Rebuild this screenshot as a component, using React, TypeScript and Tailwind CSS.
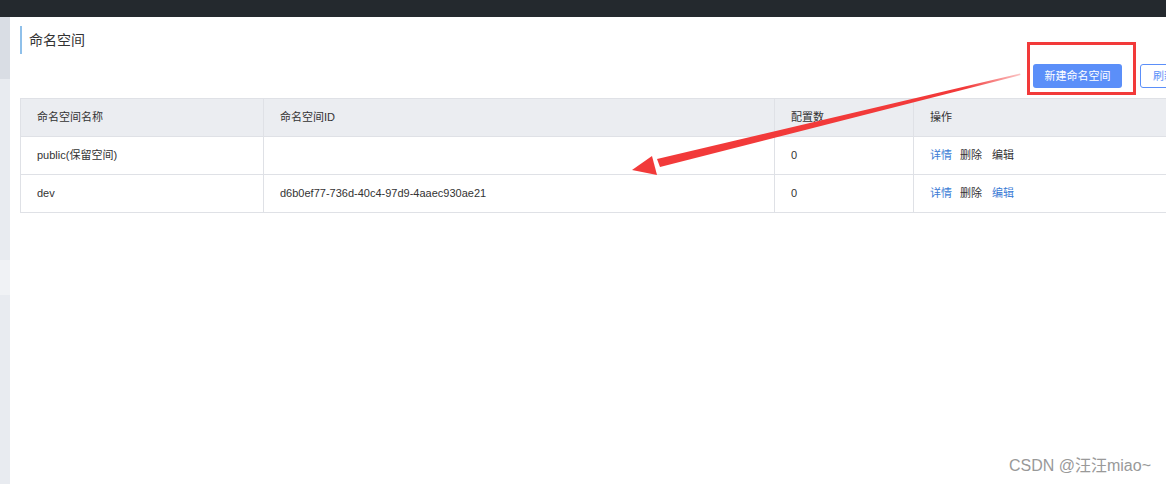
import React from "react";

const rows = [
  { name: "public(保留空间)", id: "", count: "0", editBlue: false },
  { name: "dev", id: "d6b0ef77-736d-40c4-97d9-4aaec930ae21", count: "0", editBlue: true },
];

const cellCls = "border-r border-b border-[#dfe1e6] px-4 align-middle";

export default function App() {
  return (
    <div
      className="relative w-[1166px] h-[484px] overflow-hidden bg-white text-[11px] text-[#333]"
      style={{ fontFamily: '"Liberation Sans", "Noto Sans CJK SC", sans-serif' }}
    >
      <div className="h-[17px] bg-[#24292e]" />
      <div className="flex h-[467px]">
        {/* sidebar edge */}
        <div className="w-[10px] shrink-0 flex flex-col bg-[#e8ebf0]">
          <div className="h-[62px] bg-[#d9dde4]" />
          <div className="h-[181px]" />
          <div className="h-[35px] bg-[#f0f2f5]" />
        </div>

        <div className="flex-1 pl-[10px] pt-[9px]">
          <div className="w-[1168px]">
            <div className="h-[28px] border-l-2 border-[#8fc0ea] pl-[7px] flex items-center text-[14px] text-[#333]">
              命名空间
            </div>

            <div className="mt-[10px] flex justify-end gap-[18px]">
              <div className="relative">
                <button className="h-[24px] w-[89px] rounded-[3px] bg-[#5b8ff9] text-white text-[11px]">
                  新建命名空间
                </button>
                <div className="absolute -left-[6px] -top-[22px] -right-[14px] -bottom-[7px] border-[3px] border-[#f23a3a]" />
              </div>
              <button className="h-[24px] w-[48px] rounded-[3px] border border-[#5b8ff9] bg-white text-[#5b8ff9] text-[11px]">
                刷新
              </button>
            </div>

            <table className="mt-[10px] w-full border-collapse border-l border-t border-[#dfe1e6] table-fixed">
              <colgroup>
                <col className="w-[243px]" />
                <col className="w-[511px]" />
                <col className="w-[139px]" />
                <col />
              </colgroup>
              <thead>
                <tr className="h-[38px] bg-[#ebedf1] text-left">
                  <th className={cellCls + " font-normal"}>命名空间名称</th>
                  <th className={cellCls + " font-normal"}>命名空间ID</th>
                  <th className={cellCls + " font-normal"}>配置数</th>
                  <th className={cellCls + " font-normal"}>操作</th>
                </tr>
              </thead>
              <tbody>
                {rows.map((r) => (
                  <tr key={r.name} className="h-[38px]">
                    <td className={cellCls}>{r.name}</td>
                    <td className={cellCls}>{r.id}</td>
                    <td className={cellCls}>{r.count}</td>
                    <td className={cellCls}>
                      <span className="text-[#3a7bd5]">详情</span>
                      <span className="ml-[8px] text-[#333]">删除</span>
                      <span className={"ml-[10px] " + (r.editBlue ? "text-[#3a7bd5]" : "text-[#333]")}>编辑</span>
                    </td>
                  </tr>
                ))}
              </tbody>
            </table>
          </div>
        </div>
      </div>

      {/* annotation arrow */}
      <svg className="absolute left-0 top-0 pointer-events-none" width="1166" height="484">
        <defs>
          <linearGradient id="fade" x1="1020" y1="74" x2="660" y2="163" gradientUnits="userSpaceOnUse">
            <stop offset="0" stopColor="#f23a3a" stopOpacity="0.3" />
            <stop offset="0.15" stopColor="#f23a3a" />
            <stop offset="1" stopColor="#f23a3a" />
          </linearGradient>
        </defs>
        <polygon points="1020,73.5 1020.5,75 660,167 657,159" fill="url(#fade)" />
        <polygon points="632,170 652,156 657,175" fill="#f23a3a" />
      </svg>

      <div
        className="absolute right-[15px] bottom-[6px] text-[16px] text-[#999]"
        style={{ textShadow: "0 0 1px #fff" }}
      >
        CSDN @汪汪miao~
      </div>
    </div>
  );
}
